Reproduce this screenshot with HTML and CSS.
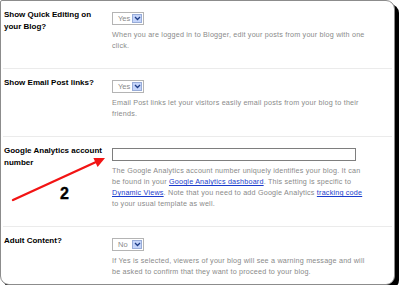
FILE: index.html
```html
<!DOCTYPE html>
<html lang="en">

<head>
    <meta charset="UTF-8" />
    <meta name="viewport" content="width=device-width, initial-scale=1.0" />
    <title>Blog Settings</title>
    <link rel="stylesheet" href="styles.css">
</head>

<body>
    <main class="panel">
        <div class="row">
            <label class="row-label">Show Quick Editing on your Blog?</label>
            <div class="row-control">
                <div class="select">
                    <span class="select-value">Yes</span>
                    <span class="select-btn">
                        <svg width="7" height="5" viewBox="0 0 7 5"><path d="M1 1 L3.5 3.5 L6 1" fill="none" stroke="#1d3c86" stroke-width="1.3" /></svg>
                    </span>
                </div>
                <p class="help">When you are logged in to Blogger, edit your posts from your blog with one click.</p>
            </div>
        </div>

        <div class="row">
            <label class="row-label">Show Email Post links?</label>
            <div class="row-control">
                <div class="select">
                    <span class="select-value">Yes</span>
                    <span class="select-btn">
                        <svg width="7" height="5" viewBox="0 0 7 5"><path d="M1 1 L3.5 3.5 L6 1" fill="none" stroke="#1d3c86" stroke-width="1.3" /></svg>
                    </span>
                </div>
                <p class="help">Email Post links let your visitors easily email posts from your blog to their friends.</p>
            </div>
        </div>

        <div class="row">
            <label class="row-label" for="ga-id">Google Analytics account number</label>
            <div class="row-control">
                <input id="ga-id" class="text-input" type="text" />
                <p class="help">The Google Analytics account number uniquely identifies your blog. It can be found in your <a href="#">Google Analytics dashboard</a>. This setting is specific to <a href="#">Dynamic Views</a>. Note that you need to add Google Analytics <a href="#">tracking code</a> to your usual template as well.</p>
            </div>
        </div>

        <div class="row">
            <label class="row-label">Adult Content?</label>
            <div class="row-control">
                <div class="select">
                    <span class="select-value">No</span>
                    <span class="select-btn">
                        <svg width="7" height="5" viewBox="0 0 7 5"><path d="M1 1 L3.5 3.5 L6 1" fill="none" stroke="#1d3c86" stroke-width="1.3" /></svg>
                    </span>
                </div>
                <p class="help">If Yes is selected, viewers of your blog will see a warning message and will be asked to confirm that they want to proceed to your blog.</p>
            </div>
        </div>

        <!-- annotation drawn over the form -->
        <svg class="callout" width="400" height="289" viewBox="0 0 400 289">
            <line x1="13" y1="200" x2="96" y2="162" stroke="#f21414" stroke-width="2.4" stroke-linecap="round" />
            <polygon points="105,158 97.6,167 93.4,158" fill="#f21414" />
        </svg>
        <span class="step-num">2</span>
    </main>
</body>

</html>
```

FILE: styles.css
```css
body {
    margin: 0;
    background: #ffffff;
    font-family: "Liberation Sans", Arial, sans-serif;
}

.panel {
    position: relative;
    width: 393px;
    height: 283px;
    border: 1px solid #8c8c8c;
    border-radius: 2px 9px 9px 9px;
    box-shadow: 4px 4px 0 #000000;
    background: #ffffff;
}

.row {
    display: grid;
    grid-template-columns: 102px 1fr;
    column-gap: 6px;
    margin: 0 2px;
    padding: 8px 0 17px 1px;
    border-bottom: 1px solid #ebebeb;
}

.row:last-of-type {
    border-bottom: none;
}

.row-label {
    font-size: 8px;
    line-height: 12px;
    font-weight: bold;
    color: #000000;
}

.row-control {
    padding-top: 3px;
}

.select {
    display: flex;
    align-items: center;
    justify-content: space-between;
    box-sizing: border-box;
    width: 32px;
    height: 13px;
    padding: 0 1px 0 5px;
    border: 1px solid #b4b4b4;
    background: #ffffff;
}

.select-value {
    font-size: 7.5px;
    color: #8a8a8a;
}

.select-btn {
    display: flex;
    align-items: center;
    justify-content: center;
    box-sizing: border-box;
    width: 10px;
    height: 9px;
    border: 1px solid #98acd8;
    background: #c4d4fa;
}

.text-input {
    display: block;
    box-sizing: border-box;
    width: 244px;
    height: 13px;
    margin: 0;
    padding: 0;
    border: 1px solid #7e7e7e;
    background: #ffffff;
}

.help {
    width: 256px;
    margin: 4px 0 0;
    font-size: 7.2px;
    line-height: 11px;
    letter-spacing: 0.2px;
    color: #8a8a8a;
}

.help a {
    color: #1a3ccc;
    text-decoration: underline;
}

.callout {
    position: absolute;
    left: -1px;
    top: -1px;
    pointer-events: none;
}

.step-num {
    position: absolute;
    left: 59px;
    top: 184.5px;
    font-size: 16px;
    line-height: 16px;
    font-weight: bold;
    color: #000000;
    -webkit-text-stroke: 0.4px #000000;
}
```
